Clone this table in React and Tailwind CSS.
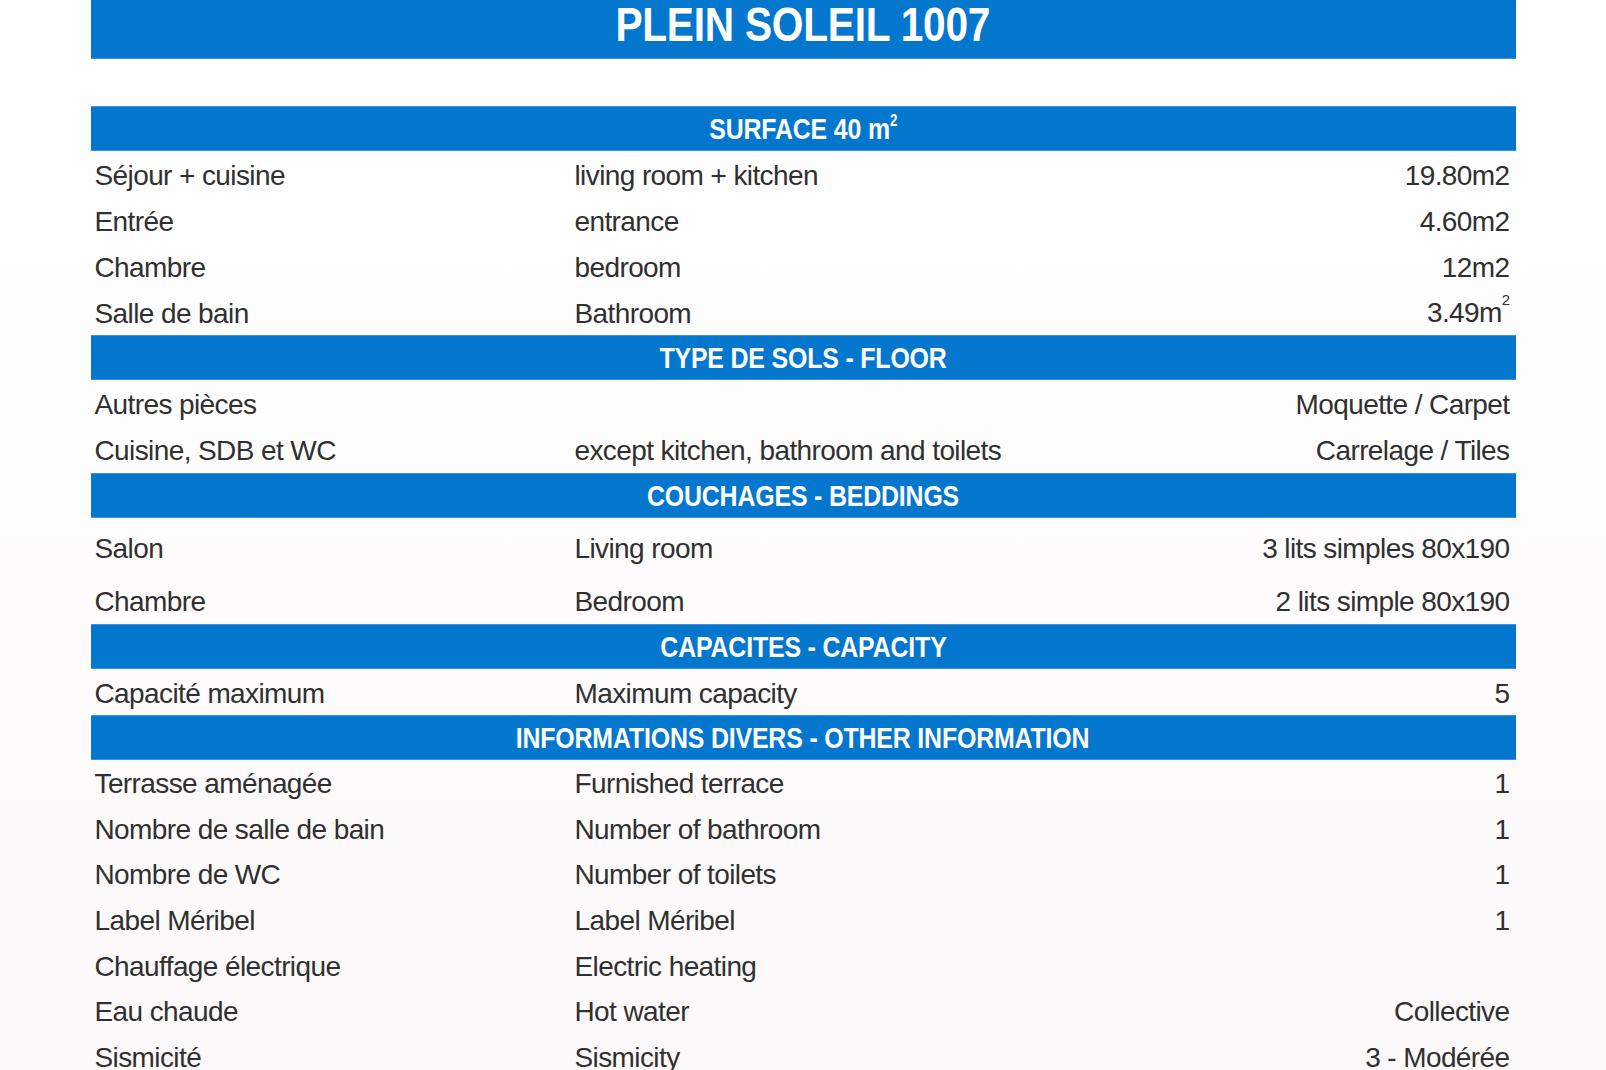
import React from "react";

const sections = [
  {
    title: (
      <>
        SURFACE 40 m<sup className="text-[16px] relative -top-[2px] align-super leading-none">2</sup>
      </>
    ),
    rowH: "h-[46px] pt-[3px]",
    rows: [
      ["Séjour + cuisine", "living room + kitchen", "19.80m2"],
      ["Entrée", "entrance", "4.60m2"],
      ["Chambre", "bedroom", "12m2"],
      [
        "Salle de bain",
        "Bathroom",
        <>
          3.49m<sup className="text-[15px] align-super leading-none">2</sup>
        </>,
      ],
    ],
  },
  {
    title: "TYPE DE SOLS - FLOOR",
    rowH: "h-[46.5px] pt-[3px]",
    rows: [
      ["Autres pièces", "", "Moquette / Carpet"],
      ["Cuisine, SDB et WC", "except kitchen, bathroom and toilets", "Carrelage / Tiles"],
    ],
  },
  {
    title: "COUCHAGES - BEDDINGS",
    rowH: "h-[53px] pt-[8px]",
    rows: [
      ["Salon", "Living room", "3 lits simples 80x190"],
      ["Chambre", "Bedroom", "2 lits simple 80x190"],
    ],
  },
  {
    title: "CAPACITES - CAPACITY",
    rowH: "h-[46px] pt-[3px]",
    rows: [["Capacité maximum", "Maximum capacity", "5"]],
  },
  {
    title: "INFORMATIONS DIVERS - OTHER INFORMATION",
    rowH: "h-[45.6px] pt-[3px]",
    rows: [
      ["Terrasse aménagée", "Furnished terrace", "1"],
      ["Nombre de salle de bain", "Number of bathroom", "1"],
      ["Nombre de WC", "Number of toilets", "1"],
      ["Label Méribel", "Label Méribel", "1"],
      ["Chauffage électrique", "Electric heating", ""],
      ["Eau chaude", "Hot water", "Collective"],
      ["Sismicité", "Sismicity", "3 - Modérée"],
    ],
  },
];

function SectionBar({ children }) {
  return (
    <div className="h-[45px] bg-[#0377cd] border-y border-[#3f93dc] flex items-center justify-center">
      <span className="inline-block scale-x-[0.83] origin-center whitespace-nowrap text-white font-bold text-[30px] leading-none tracking-[-0.2px]">
        {children}
      </span>
    </div>
  );
}

export default function App() {
  return (
    <div
      className="h-[1070px] overflow-hidden bg-gradient-to-b from-white to-[#fcf9fa] text-[#303030]"
      style={{ fontFamily: '"Liberation Sans", Arial, sans-serif' }}
    >
      <div className="w-[1425px] mx-auto">
        <div className="h-[59px] bg-[#0377cd] border-b border-[#3f93dc] flex items-center justify-center pb-[10px]">
          <h1 className="inline-block scale-x-[0.83] origin-center whitespace-nowrap text-white font-bold text-[49px] leading-none tracking-[-0.3px]">
            PLEIN SOLEIL 1007
          </h1>
        </div>
        <div className="h-[47px]" />
        {sections.map((s, i) => (
          <div key={i}>
            <SectionBar>{s.title}</SectionBar>
            {s.rows.map((r, j) => (
              <div
                key={j}
                className={`${s.rowH} grid grid-cols-[480px_1fr_auto] items-center pl-[4px] pr-[6px] text-[28px] leading-none tracking-[-0.6px]`}
              >
                <div>{r[0]}</div>
                <div>{r[1]}</div>
                <div className="text-right">{r[2]}</div>
              </div>
            ))}
          </div>
        ))}
      </div>
    </div>
  );
}
